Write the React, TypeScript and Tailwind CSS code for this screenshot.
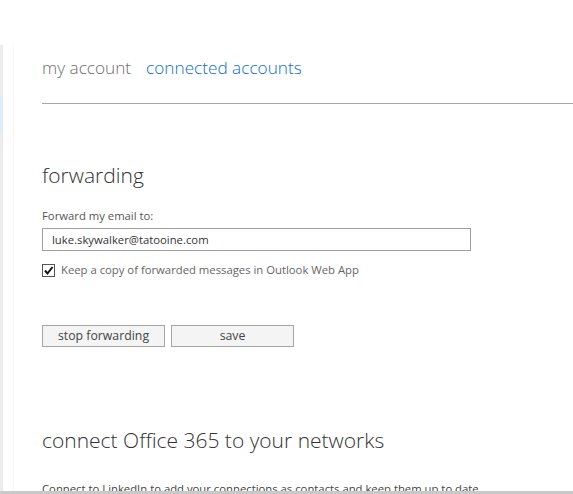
import React from "react";

export default function App() {
  return (
    <div
      className="w-[573px] h-[494px] bg-white flex flex-col overflow-hidden"
      style={{ fontFamily: '"Open Sans", "Noto Sans", sans-serif' }}
    >
      <div className="flex flex-1 min-h-0">
        <div className="w-[3px] shrink-0 flex flex-col">
          <div className="h-[45px] shrink-0 bg-white" />
          <div className="h-[51px] shrink-0 bg-[#ececec]" />
          <div className="h-[35px] shrink-0 bg-[#deebf8]" />
          <div className="flex-1 bg-[#ececec]" />
        </div>
        <div className="w-[10px] shrink-0" />
        <div className="w-[1px] shrink-0 mt-[45px] bg-[#f7f7f7]" />
        <div className="flex-1 min-w-0 pl-[28px] overflow-hidden">
          <div className="pt-[56px] flex items-baseline gap-[15px] text-[17.2px] font-light leading-[24px]">
            <span className="text-[#6e6e6e]">my account</span>
            <span className="text-[#0f6fc6]">connected accounts</span>
          </div>
          <div className="mt-[23px] h-[1px] bg-[#a3a9a9]" />
          <div className="mt-[57px] text-[21px] font-light leading-[28px] text-[#333]">forwarding</div>
          <div className="mt-[19px] text-[11.3px] leading-[16px] text-[#555]">Forward my email to:</div>
          <div className="mt-[4px] w-[429px] h-[23px] border border-[#a0a0a0] pl-[9px] text-[11.3px] leading-[21px] text-[#333]">
            luke.skywalker@tatooine.com
          </div>
          <div className="mt-[11px] flex items-center gap-[6px]">
            <div className="w-[13px] h-[13px] border border-[#555] bg-white flex items-center justify-center">
              <svg width="11" height="11" viewBox="0 0 11 11">
                <path d="M2 5.5 L4.5 8.5 L9.5 2" fill="none" stroke="#111" strokeWidth="2" />
              </svg>
            </div>
            <span className="text-[11.3px] leading-[16px] text-[#666]">
              Keep a copy of forwarded messages in Outlook Web App
            </span>
          </div>
          <div className="mt-[47px] flex gap-[6px]">
            <button className="w-[123px] h-[22px] border border-[#a5a5a5] bg-[#f4f4f4] text-[12.3px] leading-[20px] text-[#444]">
              stop forwarding
            </button>
            <button className="w-[123px] h-[22px] border border-[#a5a5a5] bg-[#f4f4f4] text-[12.3px] leading-[20px] text-[#444]">
              save
            </button>
          </div>
          <div className="mt-[79px] text-[21px] font-light leading-[28px] text-[#333]">
            connect Office 365 to your networks
          </div>
          <div className="mt-[27px] text-[11.3px] leading-[16px] text-[#444] whitespace-nowrap">
            Connect to LinkedIn to add your connections as contacts and keep them up to date.
          </div>
        </div>
      </div>
      <div className="h-[3px] shrink-0 bg-[#c9c9c9]" />
    </div>
  );
}
